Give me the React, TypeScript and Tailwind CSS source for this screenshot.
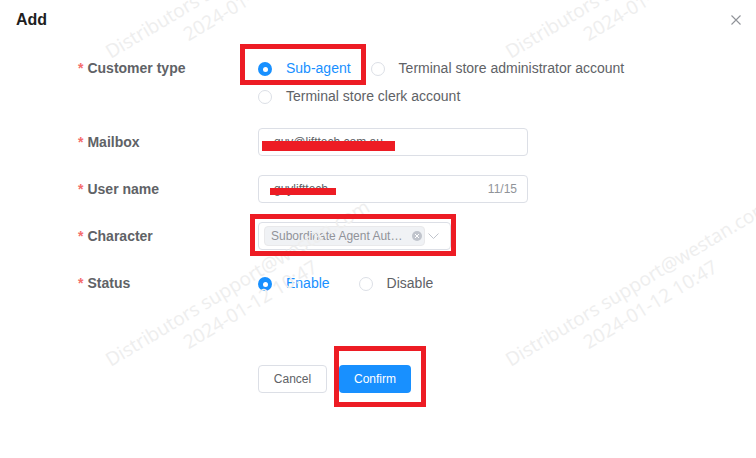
import React from 'react';

const BLUE = 'text-[#1890ff]';

const Radio = ({ checked, label, className = '' }: { checked?: boolean; label: string; className?: string }) => (
  <label className={`flex items-center ${className}`}>
    {checked ? (
      <span className="mt-[2px] flex h-[14px] w-[14px] items-center justify-center rounded-full bg-[#1890ff]">
        <span className="h-[5px] w-[5px] rounded-full bg-white" />
      </span>
    ) : (
      <span className="mt-[2px] h-[14px] w-[14px] rounded-full border border-[#dcdfe6] bg-white" />
    )}
    <span className={`ml-[14px] ${checked ? BLUE : 'text-[#606266]'}`}>{label}</span>
  </label>
);

const Row = ({ label, children, className = '' }: { label: string; children: React.ReactNode; className?: string }) => (
  <div className={`flex ${className}`}>
    <div className="flex h-[28px] w-[180px] shrink-0 items-center font-bold text-[#606266]">
      <span className="mr-[4px] text-[#f56c6c]">*</span>
      {label}
    </div>
    <div className="flex-1">{children}</div>
  </div>
);

// faint rotated watermark, centred on (cx, cy)
const Watermark = ({ cx, cy }: { cx: number; cy: number }) => (
  <div
    className="pointer-events-none absolute w-[400px] -rotate-[31deg] whitespace-nowrap text-center font-['Open_Sans',sans-serif] text-[19px] leading-[25px] text-[#eeeeee]"
    style={{ left: cx - 200, top: cy - 25 }}
  >
    <div>Distributors support@westan.com</div>
    <div>2024-01-12 10:47</div>
  </div>
);

export default function App() {
  return (
    <div className="relative h-[458px] w-[756px] overflow-hidden bg-white font-['Liberation_Sans',Arial,sans-serif] text-[14px]">
      {/* Header */}
      <div className="flex h-10 items-center justify-between pl-4 pr-[15px]">
        <h1 className="text-[16px] font-bold text-[#1f1f1f]">Add</h1>
        <svg width="10" height="10" viewBox="0 0 10 10" className="text-[#909399]">
          <path d="M0.5 0.5 L9.5 9.5 M9.5 0.5 L0.5 9.5" stroke="currentColor" strokeWidth="1.1" fill="none" />
        </svg>
      </div>

      {/* Form */}
      <div className="pl-[78px] pt-[14px]">
        <Row label="Customer type" className="mb-[18px]">
          <div className="flex h-[28px] items-center">
            <Radio checked label="Sub-agent" className="mr-[20px]" />
            <Radio label="Terminal store administrator account" />
          </div>
          <div className="flex h-[28px] items-center">
            <Radio label="Terminal store clerk account" />
          </div>
        </Row>

        <Row label="Mailbox" className="mb-[19px]">
          <div className="relative flex h-[28px] w-[270px] items-center rounded-[4px] border border-[#dcdfe6] pl-[15px] text-[12px] text-[#606266]">
            guy@lifttech.com.au
            <span className="absolute left-[3px] top-[12px] h-[10px] w-[133px] bg-[#ed1c24]" />
          </div>
        </Row>

        <Row label="User name" className="mb-[19px]">
          <div className="relative flex h-[28px] w-[270px] items-center justify-between rounded-[4px] border border-[#dcdfe6] pl-[15px] pr-[10px] text-[12px]">
            <span className="text-[#606266]">guylifttech</span>
            <span className="text-[#909399]">11/15</span>
            <span className="absolute left-[11px] top-[12px] h-[7px] w-[66px] bg-[#ed1c24]" />
          </div>
        </Row>

        <Row label="Character" className="mb-[19px]">
          <div className="flex h-[28px] w-[193px] items-center rounded-[4px] border border-[#dcdfe6] pl-[5px]">
            <div className="flex h-[20px] w-[161px] items-center rounded-[4px] border border-[#e9e9eb] bg-[#f0f2f5] pl-[6px] text-[12px] text-[#909399]">
              <span>Subordinate Agent Aut…</span>
              <span className="ml-auto mr-[2px] flex h-[10px] w-[10px] items-center justify-center rounded-full bg-[#c0c4cc]">
                <svg width="6" height="6" viewBox="0 0 6 6">
                  <path d="M1 1 L5 5 M5 1 L1 5" stroke="white" strokeWidth="1" />
                </svg>
              </span>
            </div>
            <svg width="11" height="6" viewBox="0 0 11 6" className="ml-[3px] text-[#c0c4cc]">
              <path d="M0.5 0.5 L5.5 5.5 L10.5 0.5" stroke="currentColor" strokeWidth="1" fill="none" />
            </svg>
          </div>
        </Row>

        <Row label="Status">
          <div className="flex h-[28px] items-center">
            <Radio checked label="Enable" className="mr-[29px]" />
            <Radio label="Disable" />
          </div>
        </Row>

        <div className="mt-[68px] flex pl-[180px] text-[12px]">
          <button className="h-[28px] w-[69px] rounded-[4px] border border-[#dcdfe6] bg-white text-[#606266]">Cancel</button>
          <button className="ml-[12px] h-[28px] w-[72px] rounded-[4px] bg-[#1890ff] text-white">Confirm</button>
        </div>
      </div>

      {/* Watermarks */}
      <Watermark cx={244} cy={-14} />
      <Watermark cx={644} cy={-14} />
      <Watermark cx={244} cy={294} />
      <Watermark cx={644} cy={294} />

      {/* Red annotation boxes */}
      <div className="pointer-events-none absolute left-[240px] top-[44px] h-[41px] w-[126px] border-[5px] border-[#ed1c24]" />
      <div className="pointer-events-none absolute left-[250px] top-[214px] h-[42px] w-[206px] border-[5px] border-[#ed1c24]" />
      <div className="pointer-events-none absolute left-[334px] top-[346px] h-[61px] w-[92px] border-[5px] border-[#ed1c24]" />
    </div>
  );
}
